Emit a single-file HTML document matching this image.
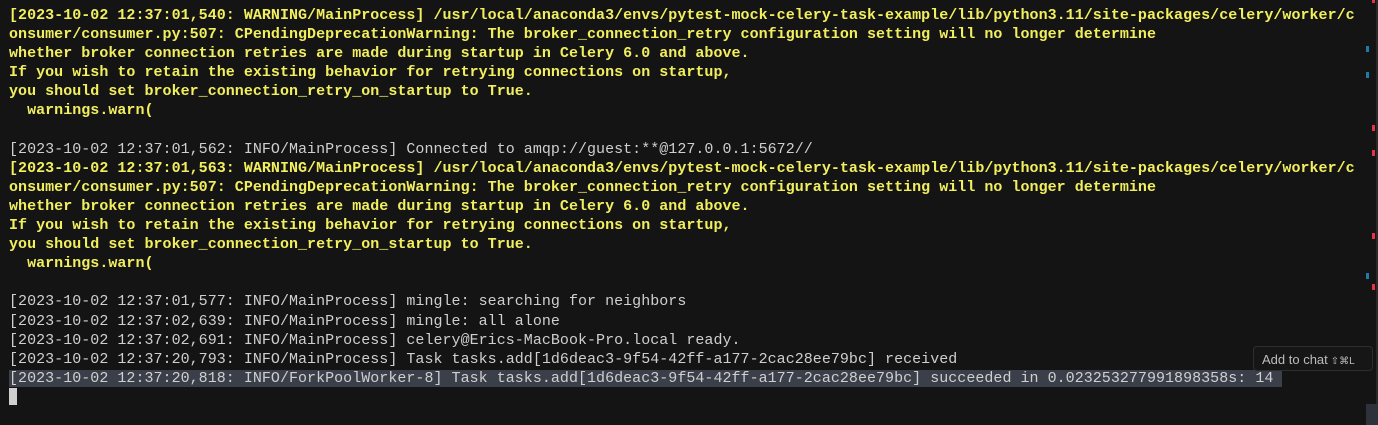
<!DOCTYPE html>
<html><head><style>
html,body{margin:0;padding:0;background:#141414;width:1378px;height:425px;overflow:hidden;position:relative}
pre{margin:0;position:absolute;left:9px;top:6px;font-family:"Liberation Mono",monospace;font-size:15px;line-height:19.1px;color:#cfcfcf;white-space:pre;letter-spacing:0.03px}
.y{color:#f2ef5e;font-weight:bold}
.sel{background:#3a3f4a}
.cur{display:inline-block;width:8px;height:17px;background:#cfcfcf;vertical-align:-4px}
.m{position:absolute;width:3px;height:6px}
.r{background:#e5334a;left:1372px}.b{background:#1f7aa5;left:1366px}
.tip{position:absolute;left:1253px;top:346px;width:120px;height:25px;border:1px solid #2e2e2e;border-radius:4px;background:#161616;color:#bdbdbd;font-family:"Liberation Sans",sans-serif;font-size:13px;line-height:25px;padding-left:8px;box-sizing:border-box}
.tip span{font-size:10px;margin-left:3px}
</style></head><body>
<pre><span class="y">[2023-10-02 12:37:01,540: WARNING/MainProcess] /usr/local/anaconda3/envs/pytest-mock-celery-task-example/lib/python3.11/site-packages/celery/worker/c
onsumer/consumer.py:507: CPendingDeprecationWarning: The broker_connection_retry configuration setting will no longer determine
whether broker connection retries are made during startup in Celery 6.0 and above.
If you wish to retain the existing behavior for retrying connections on startup,
you should set broker_connection_retry_on_startup to True.
  warnings.warn(</span>

[2023-10-02 12:37:01,562: INFO/MainProcess] Connected to amqp://guest:**@127.0.0.1:5672//
<span class="y">[2023-10-02 12:37:01,563: WARNING/MainProcess] /usr/local/anaconda3/envs/pytest-mock-celery-task-example/lib/python3.11/site-packages/celery/worker/c
onsumer/consumer.py:507: CPendingDeprecationWarning: The broker_connection_retry configuration setting will no longer determine
whether broker connection retries are made during startup in Celery 6.0 and above.
If you wish to retain the existing behavior for retrying connections on startup,
you should set broker_connection_retry_on_startup to True.
  warnings.warn(</span>

[2023-10-02 12:37:01,577: INFO/MainProcess] mingle: searching for neighbors
[2023-10-02 12:37:02,639: INFO/MainProcess] mingle: all alone
[2023-10-02 12:37:02,691: INFO/MainProcess] celery@Erics-MacBook-Pro.local ready.
[2023-10-02 12:37:20,793: INFO/MainProcess] Task tasks.add[1d6deac3-9f54-42ff-a177-2cac28ee79bc] received
<span class="sel">[2023-10-02 12:37:20,818: INFO/ForkPoolWorker-8] Task tasks.add[1d6deac3-9f54-42ff-a177-2cac28ee79bc] succeeded in 0.023253277991898358s: 14 </span>
<span class="cur"></span></pre>
<div class="m r" style="top:0;height:3px"></div>
<div class="m b" style="top:46px"></div>
<div class="m b" style="top:72px"></div>
<div class="m r" style="top:125px"></div>
<div class="m r" style="top:150px"></div>
<div class="m r" style="top:233px"></div>
<div class="m b" style="top:273px"></div>
<div class="m r" style="top:284px"></div>
<div style="position:absolute;left:1376px;top:0;width:2px;height:425px;background:#2a2a2a"></div>
<div style="position:absolute;left:1366px;top:404px;width:12px;height:21px;background:#2e333b"></div>
<div class="tip">Add to chat<span>⇧⌘L</span></div>
</body></html>
